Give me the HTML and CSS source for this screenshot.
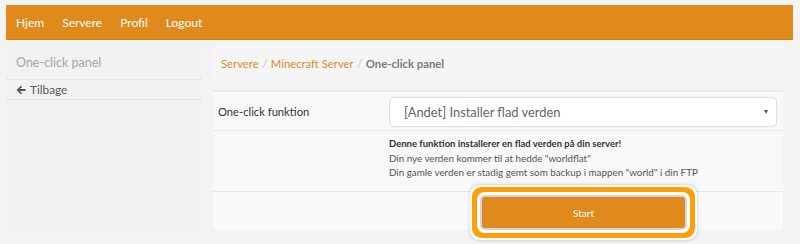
FILE: index.html
```html
<!DOCTYPE html>
<html lang="da">
<head>
<meta charset="utf-8">
<title>One-click panel</title>
<link rel="stylesheet" href="styles.css">
</head>
<body>
<div class="page">
  <nav class="navbar">
    <a class="nav-link" href="#">Hjem</a>
    <a class="nav-link" href="#">Servere</a>
    <a class="nav-link" href="#">Profil</a>
    <a class="nav-link" href="#">Logout</a>
  </nav>
  <div class="main">
    <aside class="sidebar">
      <div class="side-title">One-click panel</div>
      <a class="side-link" href="#"><svg class="arrow" width="10" height="10" viewBox="0 0 10 10"><path d="M0.5 5 L5 0.8 L6.2 2 L3.9 4.1 L9.5 4.1 L9.5 5.9 L3.9 5.9 L6.2 8 L5 9.2 Z" fill="#555"/></svg>Tilbage</a>
    </aside>
    <section class="content">
      <div class="breadcrumb">
        <a class="crumb" href="#">Servere</a><span class="sep">/</span><a class="crumb" href="#">Minecraft Server</a><span class="sep">/</span><span class="crumb-active">One-click panel</span>
      </div>
      <div class="card">
        <div class="row row-form">
          <label class="label">One-click funktion</label>
          <div class="select">
            <span class="select-text">[Andet] Installer flad verden</span>
            <span class="caret"></span>
          </div>
        </div>
        <div class="row row-info">
          <div class="info">
            <div class="info-bold">Denne funktion installerer en flad verden på din server!</div>
            <div>Din nye verden kommer til at hedde "worldflat"</div>
            <div>Din gamle verden er stadig gemt som backup i mappen "world" i din FTP</div>
          </div>
        </div>
        <div class="row row-action">
          <button class="btn-start" type="button">Start</button>
        </div>
      </div>
    </section>
  </div>
</div>
</body>
</html>
```

FILE: styles.css
```css
* { box-sizing: border-box; }
html, body { margin: 0; padding: 0; }
body {
  background: #f3f3f3;
  font-family: Lato, "Open Sans", "Liberation Sans", sans-serif;
  color: #333;
  width: 800px;
  height: 244px;
  overflow: hidden;
}
.page { padding: 5px 7px 0 6px; }
.navbar {
  height: 35px;
  background: #e08a1e;
  border-bottom: 1px solid #cf7d17;
  display: flex;
  align-items: center;
}
.nav-link {
  color: #fff;
  text-decoration: none;
  font-size: 12px;
  padding: 0 9px;
}
.nav-link:first-child { padding-left: 10px; }
.main { display: flex; }
.sidebar {
  width: 196px;
  background: #f2f2f2;
}
.side-title {
  font-size: 12.5px;
  color: #a6a6a6;
  line-height: 18px;
  padding: 14px 10px 7px;
  border-bottom: 1px solid #e4e4e4;
}
.side-link {
  display: flex;
  align-items: center;
  font-size: 11.8px;
  color: #555;
  text-decoration: none;
  height: 20px;
  padding-left: 10px;
  border-bottom: 1px solid #e4e4e4;
}
.arrow { margin-right: 4px; }
.content {
  width: 570px;
  margin-left: 11px;
}
.breadcrumb {
  margin-top: 6px;
  height: 34px;
  background: #f5f5f5;
  display: flex;
  align-items: center;
  padding-left: 8px;
  font-size: 11.3px;
}
.crumb { color: #e0892a; text-decoration: none; }
.sep { color: #c4c4c4; padding: 0 3.5px; }
.crumb-active { color: #7a7a7a; font-weight: 700; }
.card {
  margin-top: 10px;
  background: #f8f8f8;
  border-top: 2px solid #ebebeb;
}
.row { display: flex; }
.row-form {
  height: 39px;
  align-items: center;
  border-bottom: 1px solid #e8e8e8;
}
.label {
  width: 176px;
  padding-left: 5px;
  font-size: 11.2px;
  color: #333;
}
.select {
  width: 388px;
  height: 30px;
  background: #fff;
  border: 1px solid #dcdcdc;
  border-radius: 5px;
  display: flex;
  align-items: center;
  justify-content: space-between;
  padding: 0 8px 0 14px;
  margin-top: 1px;
}
.select-text { font-size: 12.9px; color: #666; }
.caret {
  width: 0; height: 0;
  border-left: 2.5px solid transparent;
  border-right: 2.5px solid transparent;
  border-top: 4px solid #555;
}
.row-info {
  padding: 6px 0 0 176px;
  height: 61px;
  border-bottom: 1px solid #e6e6e6;
}
.info {
  font-size: 9.8px;
  line-height: 14px;
  color: #555;
}
.info-bold { font-weight: 700; color: #333; font-size: 9.5px; }
.row-action {
  height: 38px;
  padding: 5px 0 0 269px;
  background: #fafafa;
}
.btn-start {
  width: 203px;
  height: 31px;
  background: #e08a1e;
  color: #fff;
  border: none;
  border-radius: 3px;
  font-family: Lato, "Open Sans", sans-serif;
  font-size: 10px;
  box-shadow:
    0 0 0 2px #d6d6d6,
    0 0 0 5px #ffffff,
    0 0 0 10px #ffa00a,
    0 0 0 12px #ffffff,
    0 0 3px 13px rgba(0,0,0,0.12);
}
```
